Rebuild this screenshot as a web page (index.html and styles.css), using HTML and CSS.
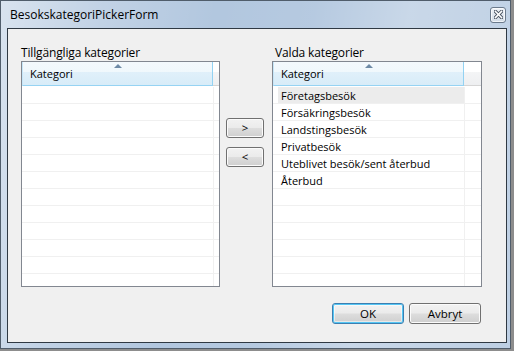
FILE: index.html
```html
<!doctype html>
<html>
<head>
<meta charset="utf-8">
<meta name="viewport" content="width=device-width,initial-scale=1">
<title>BesokskategoriPickerForm</title>
<link rel="stylesheet" href="styles.css">
</head>
<body>
<div class="window">
  <div class="titlebar">
    <span class="title">BesokskategoriPickerForm</span>
    <button class="close" title="Stäng">
      <svg width="9" height="9" viewBox="0 0 9 9">
        <path d="M1.5 1.5 L7.5 7.5 M7.5 1.5 L1.5 7.5" stroke="#4b5563" stroke-width="3.4" stroke-linecap="square"/>
        <path d="M1.5 1.5 L7.5 7.5 M7.5 1.5 L1.5 7.5" stroke="#ffffff" stroke-width="1.6" stroke-linecap="square"/>
      </svg>
    </button>
  </div>
  <div class="client">
    <div class="pickers">
      <div class="picker picker-left">
        <div class="label">Tillgängliga kategorier</div>
        <div class="listview">
          <div class="lv-header">
            <div class="lv-col">Kategori<span class="sort"></span></div>
            <div class="lv-fill"></div>
          </div>
          <div class="lv-body"></div>
        </div>
      </div>
      <div class="movers">
        <button class="btn btn-move" id="button-add">&gt;</button>
        <button class="btn btn-move" id="button-remove">&lt;</button>
      </div>
      <div class="picker picker-right">
        <div class="label">Valda kategorier</div>
        <div class="listview">
          <div class="lv-header">
            <div class="lv-col">Kategori<span class="sort"></span></div>
            <div class="lv-fill"></div>
          </div>
          <div class="lv-body">
            <div class="lv-row"><span class="lv-cell selected">Företagsbesök</span></div>
            <div class="lv-row"><span class="lv-cell">Försäkringsbesök</span></div>
            <div class="lv-row"><span class="lv-cell">Landstingsbesök</span></div>
            <div class="lv-row"><span class="lv-cell">Privatbesök</span></div>
            <div class="lv-row"><span class="lv-cell">Uteblivet besök/sent återbud</span></div>
            <div class="lv-row"><span class="lv-cell">Återbud</span></div>
          </div>
        </div>
      </div>
    </div>
    <div class="actions">
      <button class="btn btn-action btn-default">OK</button>
      <button class="btn btn-action">Avbryt</button>
    </div>
  </div>
</div>
</body>
</html>
```

FILE: styles.css
```css
body {
    margin: 0;
    background: #8d8d8d;
    font-family: "Segoe UI", "Open Sans", sans-serif;
    font-size: 12px;
    color: #000;
}
 .window {
    width: 511px;
    height: 349px;
    box-sizing: border-box;
    border: 1px solid #505d6b;
    padding: 0 3px 5px 6px;
    display: flex;
    flex-direction: column;
    background:
        linear-gradient(100deg, rgba(255,255,255,0.5) 0%, rgba(255,255,255,0.2) 18%, rgba(255,255,255,0) 38%, rgba(255,255,255,0.05) 55%, rgba(255,255,255,0.3) 72%, rgba(255,255,255,0.15) 100%),
        #b2c7df;
}
 .titlebar {
    height: 27px;
    display: flex;
    align-items: center;
    justify-content: space-between;
    padding-left: 3px;
}
 .title {
    color: #000;
    line-height: 16px;
}
 .close {
    width: 16px;
    height: 16px;
    margin-right: 1px;
    padding: 0;
    border: 1px solid #6b7a8c;
    border-radius: 3px;
    background: linear-gradient(#eef2f7, #d3dce7);
    box-shadow: inset 0 0 0 1px rgba(255,255,255,0.7);
    display: flex;
    align-items: center;
    justify-content: center;
}
 .client {
    flex: 1;
    border: 1px solid #2f3943;
    background: #f0f0f0;
    padding: 16px 24px 0 13px;
}
 .pickers {
    display: flex;
    align-items: flex-start;
}
 .picker-left {
    width: 199px;
}
 .picker-right {
    width: 210px;
    margin-left: 8px;
}
 .picker-right .label {
    padding-left: 3px;
}
 .label {
    height: 16px;
    line-height: 16px;
    letter-spacing: -0.15px;
}
 .listview {
    height: 226px;
    box-sizing: border-box;
    border: 1px solid #828790;
    background: #fff;
    overflow: hidden;
    font-size: 11px;
}
 .lv-header {
    display: flex;
    height: 24px;
}
 .lv-col {
    position: relative;
    width: 191px;
    flex: none;
    box-sizing: border-box;
    padding-left: 7px;
    line-height: 24px;
    border-left: 1px solid #c6e6f8;
    border-right: 1px solid #93d2f2;
    border-bottom: 1px solid #96d3f3;
    background: linear-gradient(#f4f9fd 0, #f0f8fc 42%, #e0f0fa 42%, #d8ecf8 100%);
}
 .sort {
    position: absolute;
    top: 2px;
    left: 50%;
    margin-left: -4px;
    width: 0;
    height: 0;
    border-left: 4px solid transparent;
    border-right: 4px solid transparent;
    border-bottom: 4px solid #6e8aa6;
}
 .lv-fill {
    flex: 1;
    border-bottom: 1px solid #d5d5d5;
    background: linear-gradient(#ffffff 0, #ffffff 42%, #f4f5f6 42%, #eeeff1 100%);
}
 .lv-body {
    margin-top: 1px;
    height: 199px;
    background:
        linear-gradient(to right, transparent 191px, #f0f0f0 191px, #f0f0f0 192px, transparent 192px),
        repeating-linear-gradient(to bottom, transparent 0, transparent 16px, #f0f0f0 16px, #f0f0f0 17px);
}
 .lv-row {
    height: 17px;
}
 .lv-cell {
    display: block;
    width: 183px;
    height: 16px;
    margin-left: 5px;
    padding-left: 3px;
    line-height: 17px;
    white-space: nowrap;
}
 .lv-cell.selected {
    background: #ececec;
}
 .movers {
    width: 38px;
    margin-left: 6px;
    padding-top: 73px;
    display: flex;
    flex-direction: column;
    gap: 9px;
}
 .btn {
    font: inherit;
    font-size: 11.5px;
    color: #000;
    padding: 0;
    border: 1px solid #707070;
    border-radius: 3px;
    background: linear-gradient(#f2f2f2 0, #ebebeb 48%, #dddddd 52%, #cfcfcf 100%);
    box-shadow: inset 0 0 0 1px #fbfbfb;
}
 .btn-move {
    height: 20px;
    line-height: 16px;
}
 .actions {
    display: flex;
    justify-content: flex-end;
    gap: 5px;
    margin-top: 16px;
    margin-right: 1px;
}
 .btn-action {
    width: 72px;
    height: 21px;
}
 .btn-default {
    border-color: #3c7fb1;
    box-shadow: inset 0 0 0 1px #55c6f4, inset 0 0 0 2px rgba(255,255,255,0.5);
}
```
